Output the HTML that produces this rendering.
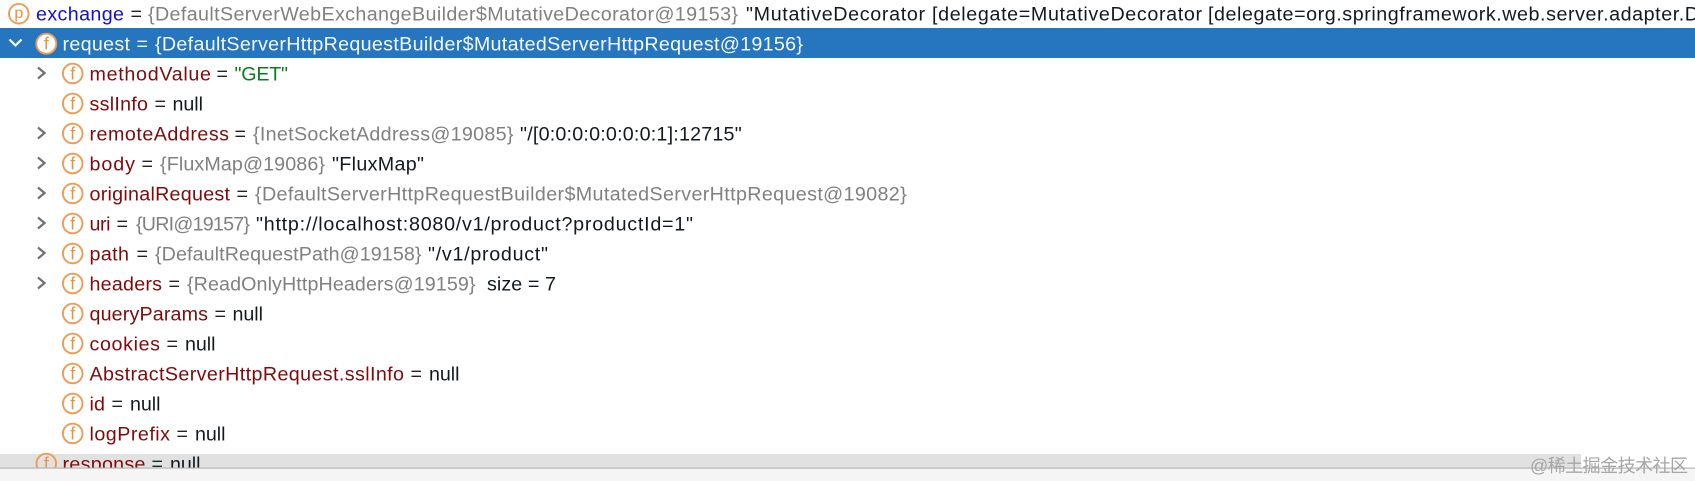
<!DOCTYPE html>
<html><head><meta charset="utf-8"><style>
html,body{margin:0;padding:0;background:#fff;width:1695px;height:481px;overflow:hidden}
svg{display:block;position:absolute;left:0;top:0}
text{font-family:"Liberation Sans","Noto Sans CJK SC",sans-serif;font-size:19.7px}
.n{fill:#800a0a}.g{fill:#808080}.k{fill:#111a22}.e{fill:#222}
.i{fill:#e8923f;font-size:17.5px;text-anchor:middle}
.p{font-size:16px}
circle{fill:none;stroke:#ec9c55;stroke-width:1.9}
polyline{fill:none;stroke:#707070;stroke-width:2.2}
</style></head><body>
<svg width="1695" height="481" viewBox="0 0 1695 481" xmlns="http://www.w3.org/2000/svg">
<defs><clipPath id="c"><rect x="0" y="440" width="1695" height="28"/></clipPath></defs>
<rect x="0" y="28" width="1695" height="30" fill="#2675bf"/>
<rect x="0" y="454" width="1581" height="14" fill="#e1e1e1"/>
<rect x="0" y="469" width="1695" height="12" fill="#f5f5f5"/>

<circle cx="18.8" cy="13.7" r="9.8"/><text class="i p" x="18.8" y="18">p</text>
<text x="36" y="20.5" fill="#1010cf" textLength="88">exchange</text><text class="e" x="130.5" y="20.5">=</text>
<text class="g" x="148" y="20.5" textLength="590">{DefaultServerWebExchangeBuilder$MutativeDecorator@19153}</text>
<text class="k" x="746" y="20.5" textLength="179">"MutativeDecorator</text>
<text class="k" x="932" y="20.5" textLength="270">[delegate=MutativeDecorator</text>
<text class="k" x="1208" y="20.5" textLength="491">[delegate=org.springframework.web.server.adapter.D</text>

<polyline points="9.5,39.5 15.5,45.5 21.5,39.5" style="stroke:#fff"/>
<circle cx="46.3" cy="43.7" r="10" style="fill:#fff"/><text class="i" x="46.3" y="49.7">f</text>
<text x="62.5" y="50.5" fill="#f4f8fc" textLength="67.5">request</text><text x="136.5" y="50.5" fill="#f4f8fc">=</text>
<text x="155" y="50.5" fill="#f4f8fc" textLength="648">{DefaultServerHttpRequestBuilder$MutatedServerHttpRequest@19156}</text>

<polyline points="38,67.5 44.5,73 38,78.5"/><circle cx="72.7" cy="73.5" r="9.8"/><text class="i" x="72.7" y="79.7">f</text>
<text class="n" x="89.5" y="80.5" textLength="121.5">methodValue</text><text class="e" x="216.5" y="80.5">=</text>
<text x="234.5" y="80.5" fill="#0a7d1c" textLength="53.5">"GET"</text>

<circle cx="72.7" cy="103.5" r="9.8"/><text class="i" x="72.7" y="109.7">f</text>
<text class="n" x="89.5" y="110.5" textLength="58.5">sslInfo</text><text class="e" x="154.5" y="110.5">=</text>
<text class="k" x="172.5" y="110.5" textLength="30.5">null</text>

<polyline points="38,127.5 44.5,133 38,138.5"/><circle cx="72.7" cy="133.5" r="9.8"/><text class="i" x="72.7" y="139.7">f</text>
<text class="n" x="89.5" y="140.5" textLength="139.5">remoteAddress</text><text class="e" x="234.5" y="140.5">=</text>
<text class="g" x="253" y="140.5" textLength="260.5">{InetSocketAddress@19085}</text>
<text class="k" x="520" y="140.5" textLength="221.7">"/[0:0:0:0:0:0:0:1]:12715"</text>

<polyline points="38,157.5 44.5,163 38,168.5"/><circle cx="72.7" cy="163.5" r="9.8"/><text class="i" x="72.7" y="169.7">f</text>
<text class="n" x="89.5" y="170.5" textLength="45.5">body</text><text class="e" x="141.5" y="170.5">=</text>
<text class="g" x="160" y="170.5" textLength="165">{FluxMap@19086}</text>
<text class="k" x="332" y="170.5" textLength="92">"FluxMap"</text>

<polyline points="38,187.5 44.5,193 38,198.5"/><circle cx="72.7" cy="193.5" r="9.8"/><text class="i" x="72.7" y="199.7">f</text>
<text class="n" x="89.5" y="200.5" textLength="140.5">originalRequest</text><text class="e" x="236.5" y="200.5">=</text>
<text class="g" x="255" y="200.5" textLength="651.7">{DefaultServerHttpRequestBuilder$MutatedServerHttpRequest@19082}</text>

<polyline points="38,217.5 44.5,223 38,228.5"/><circle cx="72.7" cy="223.5" r="9.8"/><text class="i" x="72.7" y="229.7">f</text>
<text class="n" x="89.5" y="230.5" textLength="21">uri</text><text class="e" x="116.5" y="230.5">=</text>
<text class="g" x="136" y="230.5" textLength="114">{URI@19157}</text>
<text class="k" x="256" y="230.5" textLength="437">"http://localhost:8080/v1/product?productId=1"</text>

<polyline points="38,247.5 44.5,253 38,258.5"/><circle cx="72.7" cy="253.5" r="9.8"/><text class="i" x="72.7" y="259.7">f</text>
<text class="n" x="89.5" y="260.5" textLength="39.5">path</text><text class="e" x="136.5" y="260.5">=</text>
<text class="g" x="155" y="260.5" textLength="266.5">{DefaultRequestPath@19158}</text>
<text class="k" x="428" y="260.5" textLength="120">"/v1/product"</text>

<polyline points="38,277.5 44.5,283 38,288.5"/><circle cx="72.7" cy="283.5" r="9.8"/><text class="i" x="72.7" y="289.7">f</text>
<text class="n" x="89.5" y="290.5" textLength="72.5">headers</text><text class="e" x="168.5" y="290.5">=</text>
<text class="g" x="187" y="290.5" textLength="288.5">{ReadOnlyHttpHeaders@19159}</text>
<text class="k" x="487" y="290.5" textLength="69">size = 7</text>

<circle cx="72.7" cy="313.5" r="9.8"/><text class="i" x="72.7" y="319.7">f</text>
<text class="n" x="89.5" y="320.5" textLength="118.5">queryParams</text><text class="e" x="214.5" y="320.5">=</text>
<text class="k" x="232.5" y="320.5" textLength="30.5">null</text>

<circle cx="72.7" cy="343.5" r="9.8"/><text class="i" x="72.7" y="349.7">f</text>
<text class="n" x="89.5" y="350.5" textLength="70.5">cookies</text><text class="e" x="166.5" y="350.5">=</text>
<text class="k" x="185" y="350.5" textLength="30.5">null</text>

<circle cx="72.7" cy="373.5" r="9.8"/><text class="i" x="72.7" y="379.7">f</text>
<text class="n" x="89.5" y="380.5" textLength="314.5">AbstractServerHttpRequest.sslInfo</text><text class="e" x="410.5" y="380.5">=</text>
<text class="k" x="429" y="380.5" textLength="30.5">null</text>

<circle cx="72.7" cy="403.5" r="9.8"/><text class="i" x="72.7" y="409.7">f</text>
<text class="n" x="89.5" y="410.5" textLength="15.5">id</text><text class="e" x="111.5" y="410.5">=</text>
<text class="k" x="130" y="410.5" textLength="30.5">null</text>

<circle cx="72.7" cy="433.5" r="9.8"/><text class="i" x="72.7" y="439.7">f</text>
<text class="n" x="89.5" y="440.5" textLength="80.5">logPrefix</text><text class="e" x="176.5" y="440.5">=</text>
<text class="k" x="195" y="440.5" textLength="30.5">null</text>

<g clip-path="url(#c)">
<circle cx="46.3" cy="463.5" r="9.8"/><text class="i" x="46.3" y="469.7">f</text>
<text class="n" x="62.5" y="470.5" textLength="83">response</text><text class="e" x="151.5" y="470.5">=</text>
<text class="k" x="170" y="470.5" textLength="30.5">null</text>
</g>
<rect x="0" y="467.5" width="1695" height="1.2" fill="#b4b4b4"/>
<text x="1530" y="472" fill="#a6a6a6" style="font-size:18px" textLength="158">@稀土掘金技术社区</text>
</svg>
</body></html>
